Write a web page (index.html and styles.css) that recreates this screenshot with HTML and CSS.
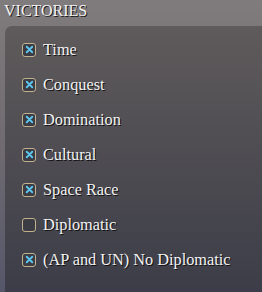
FILE: index.html
```html
<!DOCTYPE html>
<html>
<head>
<meta charset="utf-8">
<link rel="stylesheet" href="styles.css">
</head>
<body>
<div class="page">
  <div class="title">VICTORIES</div>
  <div class="panel">
    <div class="row"><span class="box checked"><svg viewBox="0 0 12 12"><path d="M3 3L9 9M9 3L3 9"/></svg></span><span class="label">Time</span></div>
    <div class="row"><span class="box checked"><svg viewBox="0 0 12 12"><path d="M3 3L9 9M9 3L3 9"/></svg></span><span class="label">Conquest</span></div>
    <div class="row"><span class="box checked"><svg viewBox="0 0 12 12"><path d="M3 3L9 9M9 3L3 9"/></svg></span><span class="label">Domination</span></div>
    <div class="row"><span class="box checked"><svg viewBox="0 0 12 12"><path d="M3 3L9 9M9 3L3 9"/></svg></span><span class="label">Cultural</span></div>
    <div class="row"><span class="box checked"><svg viewBox="0 0 12 12"><path d="M3 3L9 9M9 3L3 9"/></svg></span><span class="label">Space Race</span></div>
    <div class="row"><span class="box"></span><span class="label">Diplomatic</span></div>
    <div class="row"><span class="box checked"><svg viewBox="0 0 12 12"><path d="M3 3L9 9M9 3L3 9"/></svg></span><span class="label">(AP and UN) No Diplomatic</span></div>
  </div>
</div>
</body>
</html>
```
FILE: styles.css
```css
html, body {
  margin: 0;
  padding: 0;
}
body {
  width: 262px;
  height: 292px;
  overflow: hidden;
  background: linear-gradient(to bottom, #807b7c 0%, #6f6b70 50%, #55566a 100%);
  font-family: "Liberation Serif", serif;
  color: #f2f2f2;
}
.page {
  display: flex;
  flex-direction: column;
  height: 292px;
}
.title {
  height: 26px;
  box-sizing: border-box;
  padding: 1px 0 0 4px;
  font-size: 16px;
  line-height: 20px;
  color: #f4f4f4;
  text-shadow: 1px 1px 0 #1a1a1a;
}
.panel {
  flex: 1;
  margin-left: 5px;
  border-radius: 7px 0 0 0;
  background: linear-gradient(to bottom, #5f5b5c 0%, #4e4c52 50%, #3c3d48 100%);
  padding: 6px 0 0 17px;
  display: flex;
  flex-direction: column;
}
.row {
  height: 35px;
  display: flex;
  align-items: center;
  gap: 7px;
}
.box {
  width: 14px;
  height: 14px;
  box-sizing: border-box;
  border: 1.5px solid #c2b28e;
  border-radius: 3px;
  background: #3c3c44;
  display: flex;
  align-items: center;
  justify-content: center;
  flex: none;
}
.box svg {
  width: 11px;
  height: 11px;
  display: block;
}
.box svg path {
  stroke: #5cc8f2;
  stroke-width: 2;
  stroke-linecap: round;
  fill: none;
}
.label {
  font-size: 16.3px;
  line-height: 18px;
  text-shadow: 1px 1px 0 #111;
}
```
